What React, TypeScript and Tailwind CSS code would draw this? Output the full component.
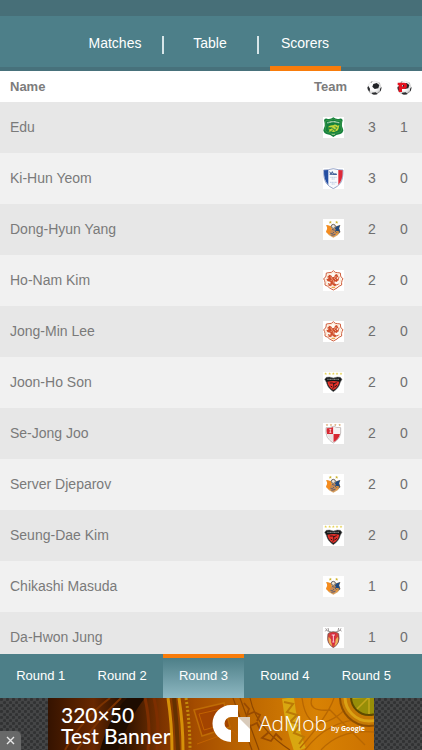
import type { ReactNode } from "react";

type Club = "jeonbuk" | "suwon" | "ulsan" | "gwangju" | "pohang" | "busan" | "seoul";

const scorers: { name: string; club: Club; goals: number; penalties: number }[] = [
  { name: "Edu", club: "jeonbuk", goals: 3, penalties: 1 },
  { name: "Ki-Hun Yeom", club: "suwon", goals: 3, penalties: 0 },
  { name: "Dong-Hyun Yang", club: "ulsan", goals: 2, penalties: 0 },
  { name: "Ho-Nam Kim", club: "gwangju", goals: 2, penalties: 0 },
  { name: "Jong-Min Lee", club: "gwangju", goals: 2, penalties: 0 },
  { name: "Joon-Ho Son", club: "pohang", goals: 2, penalties: 0 },
  { name: "Se-Jong Joo", club: "busan", goals: 2, penalties: 0 },
  { name: "Server Djeparov", club: "ulsan", goals: 2, penalties: 0 },
  { name: "Seung-Dae Kim", club: "pohang", goals: 2, penalties: 0 },
  { name: "Chikashi Masuda", club: "ulsan", goals: 1, penalties: 0 },
  { name: "Da-Hwon Jung", club: "seoul", goals: 1, penalties: 0 },
];

function Stars({ xs, y, color, r }: { xs: number[]; y: number; color: string; r: number }) {
  return (
    <>
      {xs.map((x) => (
        <path
          key={x}
          transform={`translate(${x} ${y}) scale(${r})`}
          d="M0-1 .28-.3 1-.3 .42.12 .62.85 0 .4-.62.85-.42.12-1-.3-.28-.3Z"
          fill={color}
        />
      ))}
    </>
  );
}

const crests: Record<Club, ReactNode> = {
  jeonbuk: (
    <>
      <path d="M31 1q9 7 19 4 6-1 9 4l-2 10q-2 8 3 17l1 5q-2 7-9 10-13 2-21 9-8-7-21-9-7-3-9-10l1-5q5-9 3-17L3 9q3-5 9-4 10 3 19-4Z" fill="#15803c" />
      <path d="M31 6q9 5 19 4l5 2q-4 14 1 27-2 6-8 7-10 2-17 6-7-4-17-6-6-1-8-7 5-13 1-27l5-2q10 1 19-4Z" fill="none" stroke="#58ad55" strokeWidth="1.5" />
      <path d="M13 18q18-8 36 0" fill="none" stroke="#cfe5c8" strokeWidth="4" strokeDasharray="3 1" />
      <path d="M14 31q7-8 17-6 4-5 13 1l5-2-2 10q-2 9-9 9-6 4-13 0l-8 1 3-6-6-3 8 1 6-4-7-1Z" fill="#c3d53a" />
      <path d="M20 36q7-7 12 0t10-6M25 42l6-4 7 3M35 29l5 2" fill="none" stroke="#16823a" strokeWidth="2.4" />
      <path d="M26 52h10" stroke="#d9e7b4" strokeWidth="2" />
    </>
  ),
  suwon: (
    <>
      <path d="M31 2 16 5 2 6q-1 26 8 40 8 10 21 16 13-6 21-16 9-14 8-40l-14-1Z" fill="#f7f9fc" stroke="#687caf" strokeWidth="2" />
      <path d="m3 7 13-1v45Q2 36 3 7Z" fill="#244ea2" />
      <path d="m46 6 13 1q1 29-13 44Z" fill="#dd2938" />
      <path d="m20 11 4 7 4-7 3 7h9M20 19h22" fill="none" stroke="#193d81" strokeWidth="2.5" />
      <path d="M22 28h19M26 33h10M21 43h21M26 48h10" stroke="#a1b4d5" strokeWidth="2" strokeDasharray="4 1" />
    </>
  ),
  ulsan: (
    <>
      <Stars xs={[22, 41]} y={10} color="#cdb32d" r={5} />
      <path d="m31 15-9 6-12-3 3 10-3 11 8 10 13 7 13-7 8-10-3-11 3-10-12 3Z" fill="#d9a565" />
      <path d="m10 18 14 4 2 16-7 9-10-8 4-11Z" fill="#f58c1e" />
      <path d="m52 18-14 5-4 12 9 10 9-6-4-11Z" fill="#1f4a80" />
      <circle cx="31" cy="22" r="6" fill="#ece4d6" stroke="#6b6a6e" strokeWidth="3" />
      <path d="m20 40 7-11 12 2-3 6 6 8-11 8-10-6 7-5Z" fill="#c68a55" />
      <path d="M22 43q8 3 11-4M27 31l8 3M25 49l12-3" fill="none" stroke="#4f5a75" strokeWidth="2.5" />
      <path d="m39 38 7 1-6 8" fill="none" stroke="#f19a34" strokeWidth="4" />
    </>
  ),
  gwangju: (
    <>
      <path d="M31 2q5 7 13 6l8 1 1 9q1 5 7 8l-3 6q-2 5-1 13-9 3-14 9l-11 6-11-6Q15 48 6 45q1-8-1-13l-3-6q6-3 7-8l1-9 8-1q8 1 13-6Z" fill="#fffaf3" stroke="#d0603f" strokeWidth="3" />
      <path d="M31 7q5 5 16 6l1 7q2 5 6 8-4 6-3 13-8 3-12 9l-8 5-8-5q-4-6-12-9 1-7-3-13 4-3 6-8l1-7q11-1 16-6Z" fill="none" stroke="#f3bd8c" />
      <path d="M19 14q7 1 9 8l6-2q0-7 8-8l4 8-6 4 7 5-6 7-6-2-1 6 8 4-6 5-7-4-8 4-7-4 9-5-1-5-8-1-4-6 8-3-4-5Z" fill="#cf4e2b" />
      <path d="m14 20 4 8M48 20l-3 12M15 40l8 4M47 42l-7 3" fill="none" stroke="#d9694a" strokeWidth="3" />
      <path d="m23 20 5 8-5 5M40 18l-6 7 5 5M31 30v8M25 46l5-5" fill="none" stroke="#ffdcc0" strokeWidth="1.8" />
      <path d="M26 52h10" stroke="#f0a94e" strokeWidth="4" />
    </>
  ),
  pohang: (
    <>
      <Stars xs={[8, 20, 31, 42, 54]} y={5} color="#e4d051" r={4.5} />
      <path d="m10 16 9-1 12 3 12-3 9 1 5 6-5 9q-3 17-21 28Q13 48 10 31l-5-9Z" fill="#17191a" stroke="#777" strokeWidth="1.5" />
      <path d="M13 22h36" stroke="#7c7d7c" strokeWidth="3.5" strokeDasharray="3 1" />
      <path d="M13 29q18-4 36 0-4 18-18 25-14-7-18-25Z" fill="#e8322a" />
      <path d="M20 33h8l7 2M41 32q-13 2-9 8t-3 10M23 42l5 3M41 39l-4 6" fill="none" stroke="#301417" strokeWidth="3" />
    </>
  ),
  busan: (
    <>
      <Stars xs={[12, 24, 37, 50]} y={6} color="#d7a56e" r={4} />
      <path d="M31 10q-9 5-22 4-2 18 4 29 7 11 18 17 11-6 18-17 6-11 4-29-13 1-22-4Z" fill="#fff" stroke="#a79b9a" strokeWidth="2" />
      <path d="M31 12q-9 4-20 4-1 9 1 17h19Z" fill="#d72832" />
      <path d="M31 33h20q-4 16-20 25Z" fill="#d72832" />
      <path d="M19 19h6M19 28h6M22 19v9" stroke="#fff" strokeWidth="2" />
      <path d="M31 13q10 4 20 3v17H31Z" fill="#f6f2f2" />
      <path d="M12 33h19v25Q15 47 12 33Z" fill="#e9e6e5" />
    </>
  ),
  seoul: (
    <>
      <path d="m8 4 5 8 8 2 8 5M54 4l-5 8-8 2-8 5M17 12l-2-9M45 12l2-9M10 9 7 13M52 9l3 4" fill="none" stroke="#9b9595" strokeWidth="3" />
      <path d="M31 14q-10 0-16 6-3 17 1 26 5 11 15 16 10-5 15-16 4-9 1-26-6-6-16-6Z" fill="#d64338" stroke="#54484b" strokeWidth="2" />
      <path d="m17 29 8 9 2 20Q13 46 17 29M45 29l-8 9-2 20q14-12 10-29" fill="#edb35b" />
      <path d="M21 20q10-4 20 0l-4 7v20l-6 7-6-7V27Z" fill="#d72743" />
      <path d="M26 24h10M31 24v20M28 45h6" stroke="#fff" strokeWidth="2.5" />
    </>
  ),
};

function Crest({ club }: { club: Club }) {
  return (
    <svg viewBox="0 0 63 63" className="mx-auto block size-[21px]" aria-hidden="true">
      <rect width="63" height="63" fill="#fff" />
      {crests[club]}
    </svg>
  );
}

function Ball({ penalty = false }: { penalty?: boolean }) {
  return (
    <svg viewBox="0 0 45 45" className="mx-auto block size-[15px]" role="img" aria-label={penalty ? "Penalties" : "Goals"}>
      <defs>
        <radialGradient id="ballShade" cx="45%" cy="40%" r="58%">
          <stop offset="0.5" stopColor="#fbfbfb" />
          <stop offset="0.85" stopColor="#d8d8d8" />
          <stop offset="1" stopColor="#8c8c8c" />
        </radialGradient>
      </defs>
      <circle cx="22" cy="23" r="21" fill="url(#ballShade)" />
      <path d="m19 12 10-3 8 6-3 10-11 2-7-7Z" fill="#202225" />
      <path d="M1 23 4 18l5 8-1 10Q2 31 1 23ZM15 38l11-1 6 5q-9 4-17-1ZM39 27l4-6q1 9-4 14Z" fill="#2b2c2f" />
      <path d="m10 7 7-4-3 5ZM35 6l5 5-4-1Z" fill="#777" />
      {penalty && <path fillRule="evenodd" d="M2 8h19q9 0 9 9t-9 10h-6v9H5V15H2Zm13 7v5h4q2 0 2-2.500t-2-2.500Z" fill="#e51220" />}
    </svg>
  );
}

function TabDivider() {
  return <span className="mx-[11px] mt-[20px] h-[18px] w-[2px] bg-[#d7e5e8]" aria-hidden="true" />;
}

function Tab({ label, active = false }: { label: string; active?: boolean }) {
  return (
    <button
      type="button"
      className={`flex w-[71px] justify-center border-b-[5px] pt-[17px] text-[14px] leading-[20px] text-white ${
        active ? "border-[#f87c0b]" : "border-transparent"
      }`}
    >
      {label}
    </button>
  );
}

function BannerArt() {
  return (
    <svg className="absolute inset-0 size-full" viewBox="0 0 326 52" preserveAspectRatio="none" aria-hidden="true">
      <defs>
        <linearGradient id="dome">
          <stop offset="0" stopColor="#351300" />
          <stop offset="0.14" stopColor="#682800" />
          <stop offset="0.23" stopColor="#281000" />
          <stop offset="0.35" stopColor="#7c3300" />
          <stop offset="0.45" stopColor="#a44c00" />
          <stop offset="0.6" stopColor="#bb6500" />
          <stop offset="0.82" stopColor="#d88204" />
          <stop offset="1" stopColor="#cc7200" />
        </linearGradient>
      </defs>
      <rect width="326" height="52" fill="url(#dome)" />
      <path d="M17 52Q35 20 62 0M29 52Q49 22 73 0M82 0q-16 24-18 52" fill="none" stroke="#7a3200" strokeWidth="2" />
      <path d="M70 52Q82 18 97 0l-18 0Q62 17 52 52Z" fill="#1d0c00" />
      <path d="M97 0q6 26 3 52M106 0q6 26 3 52" fill="none" stroke="#7d2e00" strokeWidth="3" />
      <path d="M120 0q4 26 4 52M131 0q4 26 4 52" fill="none" stroke="#d69008" strokeWidth="3" />
      <path d="M126 0q3 26 4 52" fill="none" stroke="#643100" strokeWidth="4" />
      <path d="M138 0q4 26 4 52" fill="none" stroke="#c48c0b" strokeWidth="3" strokeDasharray="2 2" />
      <path d="m146 12 30-7 6 24-28 9Z" fill="#a34400" stroke="#bf6c05" strokeWidth="1.5" />
      <path d="m151 16 22-5 4 15-21 6ZM149 46l36-13 20 19" fill="none" stroke="#c26200" />
      <path d="M185 0 204 52M192 0 211 52M202 0Q208 30 242 52" fill="none" stroke="#8d4700" strokeWidth="1.2" />
      <path d="m196 5 5 6-2 6 7-3 6 3-3 6M200 29l9-4 3 6M221 34l-7 6 9 3 5-7 6 6" fill="none" stroke="#984a00" strokeWidth="1.8" />
      <path d="M240 0q3 27 12 52" fill="none" stroke="#d9a710" strokeWidth="12" />
      <path d="m236 4 9 2-6 8 10 3-7 7 10 2-6 9 10 4-5 7" fill="none" stroke="#bb7a05" strokeWidth="2" />
      <path d="M254 0q4 30 23 24T304 0M264 0q-5 14 18 12l35 35M286 0q-6 18-34 50M326 22q-42-5-69 30M326 34q-34-3-53 18" fill="none" stroke="#b86702" strokeWidth="1.3" />
      <circle cx="321" cy="-1" r="29" fill="#c57905" stroke="#8f4f00" strokeWidth="2" />
      <circle cx="321" cy="-1" r="24" fill="none" stroke="#dba214" strokeWidth="3" />
      <circle cx="321" cy="-1" r="18" fill="#978e08" stroke="#5f4a00" strokeWidth="2" />
      <path d="m321-1-16 1M321-1l-12 12M321-1v17" stroke="#c4a61b" strokeWidth="1.5" />
    </svg>
  );
}

function AdMobMark() {
  return (
    <svg viewBox="0 0 38 38" className="absolute top-[7px] left-[164px] size-[38px]" aria-hidden="true">
      <path d="M19 0h7v12h-7a6.500 6.500 0 0 0 0 13v12A18.500 18.500 0 0 1 19 0Z" fill="#fff" />
      <path d="M26 12h12v25H26Z" fill="#fff" />
      <path d="M26 12h12v12Z" fill="#d9cbbb" />
    </svg>
  );
}

function Banner() {
  return (
    <aside className="relative flex h-[52px] shrink-0 justify-center overflow-hidden bg-[#343536]" aria-label="Advertisement">
      <svg className="absolute inset-0 size-full" aria-hidden="true">
        <defs>
          <pattern id="mesh" width="6" height="6" patternUnits="userSpaceOnUse">
            <rect width="6" height="6" fill="#454647" />
            <circle cx="1.5" cy="1.5" r="1.6" fill="#313233" />
            <circle cx="4.5" cy="4.5" r="1.6" fill="#313233" />
          </pattern>
        </defs>
        <rect width="100%" height="100%" fill="url(#mesh)" />
      </svg>
      <a href="#banner" className="relative block h-full w-[326px] overflow-hidden text-white">
        <BannerArt />
        <span className="relative flex flex-col pt-[6px] pl-[13px] font-['Lato',sans-serif] text-[21px] leading-[21px] font-medium">
          <span className="block h-[21px]">320×50</span>
          <span className="block h-[21px]">Test Banner</span>
        </span>
        <AdMobMark />
        <span className="absolute top-[11px] left-[211px] flex items-baseline gap-[4px] font-['Open_Sans',sans-serif] whitespace-nowrap">
          <span className="text-[21px] leading-[28px] font-light">AdMob</span>
          <span className="text-[7px] font-semibold">
            by <span className="font-bold">Google</span>
          </span>
        </span>
      </a>
      <button
        type="button"
        aria-label="Close"
        className="absolute bottom-0 left-0 flex h-[19px] w-[21px] items-center justify-center rounded-tr-[5px] bg-[#686969]"
      >
        <svg viewBox="0 0 9 9" className="size-[9px]" aria-hidden="true">
          <path d="m1 1 7 7M8 1 1 8" stroke="#e8e8e8" strokeWidth="1.4" />
        </svg>
      </button>
    </aside>
  );
}

const rounds = [1, 2, 3, 4, 5];

export default function App() {
  return (
    <div className="flex h-screen flex-col overflow-hidden bg-white font-['Liberation_Sans',Arial,sans-serif]">
      <div className="h-[16px] shrink-0 bg-[#476f78]" />
      <nav className="flex h-[55px] shrink-0 justify-center bg-[linear-gradient(to_top,#47717b_4px,#4d7f89_4px)] pr-[2px]" aria-label="Sections">
        <Tab label="Matches" />
        <TabDivider />
        <Tab label="Table" />
        <TabDivider />
        <Tab label="Scorers" active />
      </nav>
      <main className="min-h-0 flex-1 overflow-hidden">
        <table className="w-full table-fixed border-collapse text-center text-[14px] text-[#6f6f6f]">
          <colgroup>
            <col />
            <col className="w-[50px]" />
            <col className="w-[28px]" />
            <col className="w-[36px]" />
          </colgroup>
          <thead>
            <tr className="h-[31px] text-[13px] text-[#7c7c7c]">
              <th scope="col" className="pl-[10px] text-left">Name</th>
              <th scope="col" className="pr-[5px]">Team</th>
              <th scope="col" className="pt-[2px] pl-[5px]"><Ball /></th>
              <th scope="col" className="pt-[2px]"><Ball penalty /></th>
            </tr>
          </thead>
          <tbody>
            {scorers.map((s) => (
              <tr key={s.name} className="h-[51px] odd:bg-[#e7e7e7] even:bg-[#f1f1f1]">
                <td className="pl-[10px] text-left text-[#7a7a7a]">{s.name}</td>
                <td><Crest club={s.club} /></td>
                <td>{s.goals}</td>
                <td>{s.penalties}</td>
              </tr>
            ))}
          </tbody>
        </table>
      </main>
      <nav className="flex h-[44px] shrink-0 bg-[#4d7f88] pr-[15px]" aria-label="Rounds">
        {rounds.map((n) => (
          <button
            type="button"
            key={n}
            className={`flex-1 border-t-4 pb-[4px] text-[13px] text-white ${
              n === 3 ? "border-[#f87c0b] bg-linear-to-b from-[#4d7f88] to-[#8eb8c2]" : "border-transparent"
            }`}
          >
            Round {n}
          </button>
        ))}
      </nav>
      <Banner />
    </div>
  );
}
